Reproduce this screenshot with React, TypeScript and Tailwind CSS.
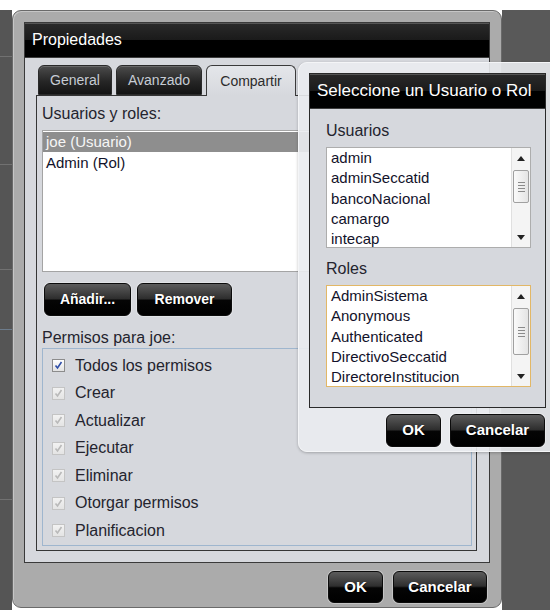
import React from 'react';

const usuarios = ['admin', 'adminSeccatid', 'bancoNacional', 'camargo', 'intecap'];
const roles = ['AdminSistema', 'Anonymous', 'Authenticated', 'DirectivoSeccatid', 'DirectoreInstitucion'];

const permisos = [
  { label: 'Todos los permisos', enabled: true },
  { label: 'Crear', enabled: false },
  { label: 'Actualizar', enabled: false },
  { label: 'Ejecutar', enabled: false },
  { label: 'Eliminar', enabled: false },
  { label: 'Otorgar permisos', enabled: false },
  { label: 'Planificacion', enabled: false },
];

const BlackButton: React.FC<{ label: string; className?: string }> = ({ label, className = '' }) => (
  <button
    className={`flex items-center justify-center rounded-[6px] border border-[#0c0c0c] bg-[linear-gradient(#5c5c5c,#2e2e2e_47%,#050505_53%,#000)] text-white font-bold shadow-[0_0_0_1px_rgba(255,255,255,0.3)] [text-shadow:0_1px_1px_#000] ${className}`}
  >
    {label}
  </button>
);

const TitleBar: React.FC<{ title: string; className?: string }> = ({ title, className = '' }) => (
  <div
    className={`h-[35px] shrink-0 flex items-center px-[7px] border-b border-[#3c3c3c] shadow-[inset_0_1px_0_#555] bg-[linear-gradient(#2a2a2a,#1a1a1a_50%,#000_50%,#000)] text-white ${className}`}
  >
    {title}
  </div>
);

const Arrow: React.FC<{ down?: boolean }> = ({ down }) => (
  <svg width="8" height="5" viewBox="0 0 8 5">
    <path d={down ? 'M0 0 H8 L4 5 Z' : 'M0 5 H8 L4 0 Z'} fill="#222" />
  </svg>
);

const ScrollBar: React.FC<{ thumb: number }> = ({ thumb }) => (
  <div className="w-[19px] shrink-0 flex flex-col items-center border-l border-[#e0e0e0] bg-[#f4f4f4]">
    <div className="h-[20px] flex items-center justify-center">
      <Arrow />
    </div>
    <div className="flex-1 w-full px-[1px] pt-[2px]">
      <div
        className="w-full rounded-[2px] border border-[#a0a0a0] bg-[linear-gradient(90deg,#fafafa,#e4e4e4)] flex flex-col items-center justify-center gap-[2px]"
        style={{ height: thumb }}
      >
        <div className="w-[7px] h-px bg-[#8a8a8a]" />
        <div className="w-[7px] h-px bg-[#8a8a8a]" />
        <div className="w-[7px] h-px bg-[#8a8a8a]" />
        <div className="w-[7px] h-px bg-[#8a8a8a]" />
      </div>
    </div>
    <div className="h-[20px] flex items-center justify-center">
      <Arrow down />
    </div>
  </div>
);

const PickList: React.FC<{ items: string[]; thumb: number; className?: string }> = ({ items, thumb, className = '' }) => (
  <div className={`flex bg-white ${className}`}>
    <div className="flex-1 overflow-hidden">
      {items.map((item) => (
        <div key={item} className="h-[20.25px] leading-[20.25px] pl-[4px] text-[15px] text-[#12122a] whitespace-nowrap">
          {item}
        </div>
      ))}
    </div>
    <ScrollBar thumb={thumb} />
  </div>
);

const CheckBox: React.FC<{ checked: boolean; enabled: boolean }> = ({ checked, enabled }) => (
  <span
    className={`w-[13px] h-[13px] shrink-0 flex items-center justify-center border ${
      enabled ? 'border-[#8c8c8c] bg-[linear-gradient(#ffffff,#e2e2e2)]' : 'border-[#c4c4c4] bg-[linear-gradient(#f2f2f2,#e4e4e4)]'
    }`}
  >
    {checked && (
      <svg width="11" height="11" viewBox="0 0 11 11">
        <path
          d="M2.5 5.5 L4.5 8 L8.5 2"
          fill="none"
          stroke={enabled ? '#2f4ea8' : '#b9b9b9'}
          strokeWidth="1.6"
        />
      </svg>
    )}
  </span>
);

const tabBase = 'h-[30px] flex items-center justify-center rounded-t-[6px] text-[14px]';

export default function App() {
  return (
    <div className="relative w-[550px] h-[610px] overflow-hidden bg-white font-['Liberation_Sans',Arial,sans-serif]">
      <div className="h-[10px]" />
      <div className="flex h-[600px]">
        {/* app background on the left, with its grid lines */}
        <div className="w-[12px] bg-[#555555] flex flex-col">
          <div className="h-[47px] border-b border-[#717171]" />
          <div className="h-[108px] border-b border-[#717171]" />
          <div className="h-[105px] border-b border-[#717171]" />
          <div className="h-[60px] border-b border-[#6d7c8c]" />
          <div className="h-[170px] border-b border-[#717171]" />
        </div>

        {/* Propiedades dialog */}
        <div className="w-[490px] h-[598px] rounded-[9px] border border-[#6a6a6a] bg-[#ababab] shadow-[inset_1px_1px_0_#c6c6c6] pt-[11px] px-[11px]">
          <div className="h-[541px] border border-[#3a3a3a] bg-[#d6d8dd] flex flex-col">
            <TitleBar title="Propiedades" className="text-[16px]" />

            <div className="mt-[7px] pl-[13px] flex gap-[4px] relative z-10">
              <div className={`${tabBase} w-[74px] border border-[#2a2a2a] bg-[linear-gradient(#4c4c4c,#262626_55%,#141414)] text-[#c6ccd4] shadow-[inset_0_1px_0_#6a6a6a]`}>
                General
              </div>
              <div className={`${tabBase} w-[86px] border border-[#2a2a2a] bg-[linear-gradient(#4c4c4c,#262626_55%,#141414)] text-[#c6ccd4] shadow-[inset_0_1px_0_#6a6a6a]`}>
                Avanzado
              </div>
              <div className={`${tabBase} w-[90px] h-[31px] -mb-px border border-b-0 border-[#3a3a3a] bg-[linear-gradient(#e4e6ea,#d6d8dd)] text-[#2c2c2c]`}>
                Compartir
              </div>
            </div>

            <div className="ml-[11px] mr-[12px] h-[456px] border border-[#353535] flex flex-col pt-[8px] pl-[5px] pr-[4px]">
              <div className="h-[20px] leading-[20px] text-[16px] text-[#24242e]">Usuarios y roles:</div>
              <div className="mt-[6px] h-[142px] bg-white border border-[#a4a4a4] pt-px">
                <div className="h-[20px] leading-[20px] pl-[3px] text-[15px] bg-[#8e8e8e] text-[#f6f6f6]">joe (Usuario)</div>
                <div className="h-[21px] leading-[21px] pl-[3px] text-[15px] text-[#12122a]">Admin (Rol)</div>
              </div>

              <div className="mt-[11px] ml-[2px] flex gap-[6px]">
                <BlackButton label="Añadir..." className="w-[87px] h-[33px] text-[14px]" />
                <BlackButton label="Remover" className="w-[95px] h-[33px] text-[14px]" />
              </div>

              <div className="mt-[12px] h-[20px] leading-[20px] text-[16px] text-[#24242e]">Permisos para joe:</div>
              <div className="h-[198px] border border-[#9fb6ce] pt-[3px] pl-[9px]">
                {permisos.map((p) => (
                  <div key={p.label} className="h-[27.5px] flex items-center gap-[10px]">
                    <CheckBox checked enabled={p.enabled} />
                    <span className="text-[16px] text-[#24242e]">{p.label}</span>
                  </div>
                ))}
              </div>
            </div>
          </div>

          <div className="mt-[8px] mr-[3px] flex justify-end gap-[10px]">
            <BlackButton label="OK" className="w-[55px] h-[32px] text-[15px]" />
            <BlackButton label="Cancelar" className="w-[94px] h-[32px] text-[15px]" />
          </div>
        </div>

        <div className="flex-1 bg-[#595959]" />
      </div>

      {/* user / role picker, floating over the dialog */}
      <div className="absolute left-[298px] top-[62px] w-[270px] h-[390px] rounded-[9px] border border-[#f4f5f7] bg-[#eaecef]/90 pt-[10px] pl-[10px] shadow-[0_1px_3px_rgba(0,0,0,0.25)]">
        <div className="w-[237px] h-[335px] border border-[#2a2a2a] bg-[#d6d8dd] flex flex-col">
          <TitleBar title="Seleccione un Usuario o Rol" className="text-[17px]" />
          <div className="pl-[16px] pr-[14px] pt-[12px] flex flex-col">
            <div className="h-[20px] leading-[20px] text-[16px] text-[#24242e]">Usuarios</div>
            <PickList items={usuarios} thumb={33} className="mt-[6px] h-[101px] border border-[#adadad]" />
            <div className="mt-[11px] h-[20px] leading-[20px] text-[16px] text-[#24242e]">Roles</div>
            <PickList items={roles} thumb={47} className="mt-[6px] h-[102px] border border-[#e2b766]" />
          </div>
        </div>
        <div className="w-[237px] mt-[6px] pr-px flex justify-end gap-[9px]">
          <BlackButton label="OK" className="w-[55px] h-[33px] text-[15px]" />
          <BlackButton label="Cancelar" className="w-[95px] h-[33px] text-[15px]" />
        </div>
      </div>
    </div>
  );
}
